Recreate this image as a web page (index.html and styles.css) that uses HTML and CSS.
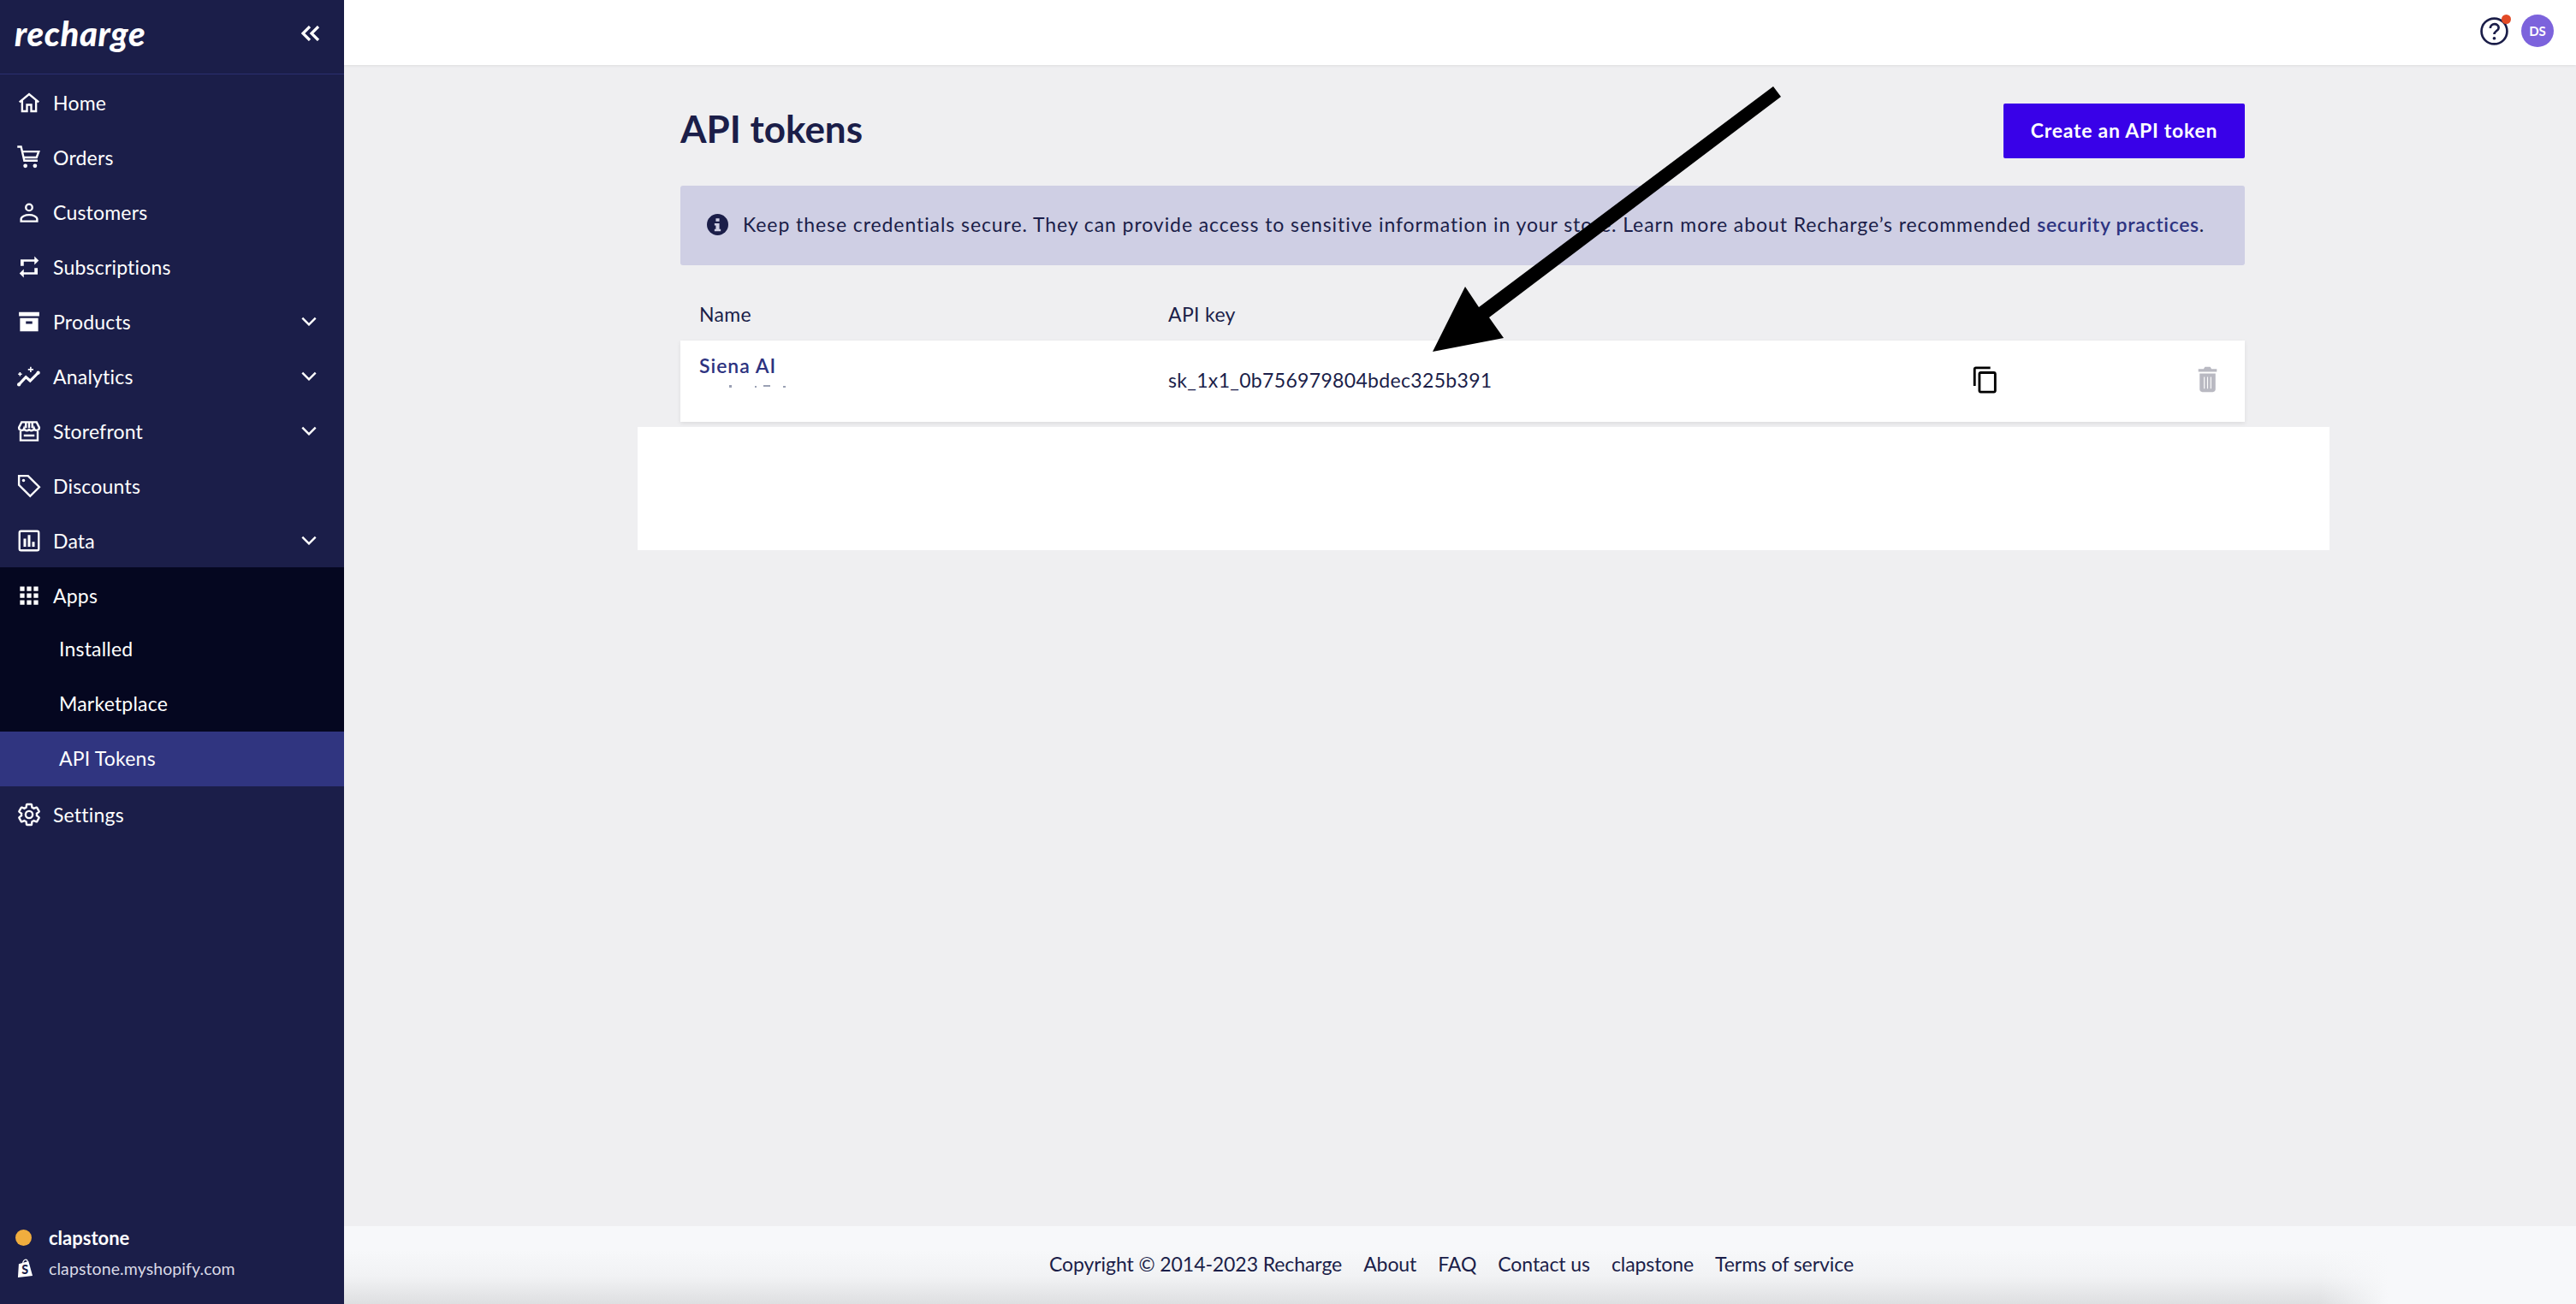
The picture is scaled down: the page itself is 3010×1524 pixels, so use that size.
FILE: index.html
```html
<!doctype html>
<html>
<head>
<meta charset="utf-8">
<title>API tokens</title>
<link rel="stylesheet" href="styles.css">
</head>
<body>
<div class="app">
	<aside class="side">
		<div class="brand">
			<span class="logo">recharge</span>
			<svg class="collapse" viewBox="0 0 22 18"><path d="M10 1 2 9l8 8M20 1l-8 8 8 8"/></svg>
		</div>
		<nav class="nav">
			<a class="item"><svg class="ico" viewBox="0 0 24 24"><path d="M3 11.500 12 4l9 7.500M5.500 10v10H10v-6h4v6h4.500V10"/></svg>Home</a>
			<a class="item"><svg class="ico" viewBox="0 0 24 24"><path d="M1 2h3.500l3 13h12.500M5.500 6.500h15.500l-2 5.500H7"/><circle class="dot" cx="8.500" cy="19.800" r="1.900"/><circle class="dot" cx="17.500" cy="19.800" r="1.900"/></svg>Orders</a>
			<a class="item"><svg class="ico" viewBox="0 0 24 24"><circle cx="12" cy="7.500" r="3"/><path d="M4.500 20.500v-2c0-2.500 4-4 7.500-4s7.500 1.500 7.500 4v2z"/></svg>Customers</a>
			<a class="item"><svg class="ico" viewBox="0 0 24 24"><path class="solid" d="M7 7h10v3l4-4-4-4v3H4v6h3V7zm10 10H7v-3l-4 4 4 4v-3h13v-6h-3v4z"/></svg>Subscriptions</a>
			<a class="item"><svg class="ico" viewBox="0 0 24 24"><path class="solid" fill-rule="evenodd" d="M2.500 3h19v3.800h-19zM3.500 8.500h17V21h-17zM9 11.500V14h6v-2.500z"/></svg>Products<svg class="chev" viewBox="0 0 16 10"><path d="M1 1.500 8 8.500l7-7"/></svg></a>
			<a class="item"><svg class="ico" viewBox="0 0 24 24"><path class="thick" d="M2.500 19.500l6.500-7 4 3.500 7.500-7.500"/><path class="thin" d="M3.500 8v3.500M1.800 9.800h3.500M13.500 3v5M11 5.500h5"/><circle class="dot" cx="2.500" cy="19.500" r="1.700"/><circle class="dot" cx="20.500" cy="8.500" r="1.700"/></svg>Analytics<svg class="chev" viewBox="0 0 16 10"><path d="M1 1.500 8 8.500l7-7"/></svg></a>
			<a class="item"><svg class="ico" viewBox="0 0 24 24"><path d="M5 3.500h14l2.500 5c0 3-4 3.500-4.800 1-.8 2.500-4.700 2.500-4.700 0 0 2.500-3.900 2.500-4.700 0C6.500 12 2.500 11.500 2.500 8.500zM4 12v8.500h16V12M9 4v5M12 4v5M15 4v5M7 16h10"/></svg>Storefront<svg class="chev" viewBox="0 0 16 10"><path d="M1 1.500 8 8.500l7-7"/></svg></a>
			<a class="item"><svg class="ico" viewBox="0 0 24 24"><path d="M2.500 2.500h8.500l10.500 10.500-8.500 8.500L2.500 11z"/><circle class="dot" cx="6.800" cy="6.800" r="1.400"/></svg>Discounts</a>
			<a class="item"><svg class="ico" viewBox="0 0 24 24"><rect x="3" y="3" width="18" height="18" rx="1.500"/><path class="solid" d="M6.800 10h2.400v7.500H6.800zM10.800 6.500h2.400v11h-2.400zM14.800 13h2.400v4.500h-2.400z"/></svg>Data<svg class="chev" viewBox="0 0 16 10"><path d="M1 1.500 8 8.500l7-7"/></svg></a>
			<div class="group">
				<a class="item"><svg class="ico" viewBox="0 0 24 24"><path class="solid" d="M3.500 3.500h4.200v4.200H3.500zM9.900 3.500h4.200v4.200H9.900zM16.300 3.500h4.200v4.200h-4.200zM3.500 9.900h4.200v4.200H3.500zM9.900 9.900h4.200v4.200H9.900zM16.300 9.900h4.200v4.200h-4.200zM3.500 16.300h4.200v4.200H3.500zM9.900 16.300h4.200v4.200H9.900zM16.300 16.300h4.200v4.200h-4.200z"/></svg>Apps</a>
				<a class="item sub">Installed</a>
				<a class="item sub">Marketplace</a>
			</div>
			<a class="item sub active">API Tokens</a>
			<a class="item"><svg class="ico" viewBox="0 0 24 24"><path d="M19.140 12.940c.04-.3.06-.61.06-.94 0-.32-.02-.64-.07-.94l2.030-1.580c.18-.14.23-.41.12-.61l-1.920-3.320c-.12-.22-.37-.29-.59-.22l-2.390.96c-.5-.38-1.030-.7-1.620-.94l-.36-2.540c-.04-.24-.24-.41-.48-.41h-3.840c-.24 0-.43.17-.47.41l-.36 2.540c-.59.24-1.130.57-1.620.94l-2.390-.96c-.22-.08-.47 0-.59.22L2.740 8.870c-.12.21-.08.47.12.61l2.030 1.580c-.05.3-.09.63-.09.94s.02.64.07.94l-2.030 1.580c-.18.14-.23.41-.12.61l1.920 3.320c.12.22.37.29.59.22l2.390-.96c.5.38 1.030.7 1.620.94l.36 2.540c.05.24.24.41.48.41h3.840c.24 0 .44-.17.47-.41l.36-2.540c.59-.24 1.130-.56 1.620-.94l2.390.96c.22.08.47 0 .59-.22l1.920-3.320c.12-.22.07-.47-.12-.61z"/><circle cx="12" cy="12" r="3.300"/></svg>Settings</a>
		</nav>
		<div class="store">
			<div class="store-line"><span class="status"></span><b class="store-name">clapstone</b></div>
			<div class="store-line"><svg class="bag" viewBox="0 0 20 24"><path class="bag-fill" d="M2 6.500 14 3l5 18-18 2z"/><path class="bag-top" d="M7 6c0-3 2-5 3.500-5S13 3 13 5"/><text class="bag-s" x="5.500" y="19">S</text></svg><span class="store-url">clapstone.myshopify.com</span></div>
		</div>
	</aside>
	<div class="main">
		<header class="top">
			<div class="help">
				<svg class="help-ico" viewBox="0 0 32 32"><circle cx="16" cy="16" r="14.500"/><path d="M11.500 12.500c0-6 9.500-6 9.500-.5 0 3.500-5 3.500-5 7.500"/><circle class="q-dot" cx="16" cy="24" r="1.800"/></svg>
				<span class="badge"></span>
			</div>
			<span class="avatar">DS</span>
		</header>
		<div class="content">
			<div class="title-row">
				<h1>API tokens</h1>
				<a class="btn">Create an API token</a>
			</div>
			<div class="alert">
				<svg class="info" viewBox="0 0 24 24"><circle cx="12" cy="12" r="12"/><path class="info-i" d="M10 5h4v3.500h-4zM8.500 10.500H14V17h1.500v2.500h-7V17H10v-4H8.500z"/></svg>
				<p>Keep these credentials secure. They can provide access to sensitive information in your store. Learn more about Recharge’s recommended <a class="link">security practices</a>.</p>
			</div>
			<div class="cols">
				<span>Name</span>
				<span>API key</span>
			</div>
			<div class="cols row">
				<div class="name-cell">
					<a class="token-name">Siena AI</a>
					<svg class="token-sub" viewBox="0 0 110 3"><path d="M35 0h3v3h-3zM65 1h2v2h-2zM75 0h8v2h-8zM98 1h3v2h-3z"/></svg>
				</div>
				<span>sk_1x1_0b756979804bdec325b391</span>
				<svg class="copy" viewBox="0 0 24 24"><path d="M16 1H4c-1.100 0-2 .9-2 2v14h2V3h12V1zm3 4H8c-1.100 0-2 .9-2 2v14c0 1.100.9 2 2 2h11c1.100 0 2-.9 2-2V7c0-1.100-.9-2-2-2zm0 16H8V7h11v14z"/></svg>
				<svg class="trash" viewBox="0 0 24 24"><path d="M5 4h4l1-1.500h4L15 4h4v2.200H5zM6 7.500h12V19.500c0 1.100-.9 2-2 2H8c-1.100 0-2-.9-2-2z"/><path class="trash-line" d="M9.500 10v9M12 10v9M14.500 10v9"/></svg>
			</div>
		</div>
		<footer class="foot">
			<span>Copyright © 2014-2023 Recharge</span>
			<a>About</a>
			<a>FAQ</a>
			<a>Contact us</a>
			<a>clapstone</a>
			<a>Terms of service</a>
		</footer>
	</div>
</div>
<div class="blank"></div>
<svg class="arrow" viewBox="0 0 3010 1524"><polygon points="2072,101 2081,113 1740,371 1757,395 1674,411 1712,335 1728,359"/></svg>
</body>
</html>
```

FILE: styles.css
```css
*{
	margin:0;
	padding:0;
	box-sizing:border-box;
}
html,body{
	height:100%;
	overflow:hidden;
}
body{
	position:relative;
	font-family:"Lato","Noto Sans",sans-serif;
	font-size:23px;
	color:#1b1e49;
	background:#efeff1;
}
.app{
	display:flex;
	height:1524px;
}

/* sidebar */
.side{
	width:402px;
	flex:none;
	display:flex;
	flex-direction:column;
	background:#1b1e49;
	color:#fff;
}
.brand{
	height:87px;
	flex:none;
	display:flex;
	align-items:center;
	justify-content:space-between;
	padding:0 28px 8px 17px;
	border-bottom:1px solid #2b2f70;
}
.logo{
	font-size:40px;
	font-weight:900;
	font-style:italic;
	letter-spacing:.6px;
}
.collapse{
	width:22px;
	height:18px;
	fill:none;
	stroke:#fff;
	stroke-width:3.2;
}
.item{
	height:64px;
	display:flex;
	align-items:center;
	gap:13px;
	padding:1px 32px 0 19px;
	font-size:23px;
	letter-spacing:.2px;
}
.group{
	background:#050720;
}
.sub{
	padding:0 32px 3px 69px;
}
.active{
	background:#303580;
}
.ico{
	width:30px;
	height:30px;
	flex:none;
	fill:none;
	stroke:#fff;
	stroke-width:1.9;
}
.ico .dot,
.ico .solid{
	fill:#fff;
	stroke:none;
}
.ico .thin{
	stroke-width:1.300;
}
.ico .thick{
	stroke-width:2.500;
}
.chev{
	width:18px;
	height:11px;
	margin-left:auto;
	fill:none;
	stroke:#fff;
	stroke-width:2.2;
}
.store{
	margin-top:auto;
	padding:0 0 24px 18px;
}
.store-line{
	display:flex;
	align-items:center;
	gap:20px;
	height:36px;
}
.status{
	width:19px;
	height:19px;
	border-radius:50%;
	background:#f0ad3e;
}
.store-name{
	font-size:22px;
}
.bag{
	width:19px;
	height:23px;
	margin-left:2px;
	margin-right:-2px;
}
.bag-fill{
	fill:#fff;
}
.bag-top{
	fill:none;
	stroke:#fff;
	stroke-width:1.3;
}
.bag-s{
	font-size:15px;
	font-weight:900;
	fill:#1b1e49;
}
.store-url{
	font-size:19.500px;
	color:#d9dae6;
	letter-spacing:.1px;
}

/* main */
.main{
	flex:1;
	display:flex;
	flex-direction:column;
}
.top{
	height:76px;
	flex:none;
	display:flex;
	align-items:center;
	justify-content:flex-end;
	gap:15px;
	padding-right:26px;
	background:#fff;
	box-shadow:0 1px 3px rgba(0,0,0,.08);
}
.help{
	position:relative;
	width:33px;
	height:33px;
	margin-top:-4px;
}
.help-ico{
	width:33px;
	height:33px;
	display:block;
	fill:none;
	stroke:#1b1e49;
	stroke-width:2.6;
}
.help-ico .q-dot{
	fill:#1b1e49;
	stroke:none;
}
.badge{
	position:absolute;
	top:-3px;
	right:-3px;
	width:11px;
	height:11px;
	border-radius:50%;
	background:#e24a26;
}
.avatar{
	width:38px;
	height:38px;
	margin-top:-4px;
	display:flex;
	align-items:center;
	justify-content:center;
	border-radius:50%;
	background:#7c63dc;
	color:#fff;
	font-size:15px;
	font-weight:700;
}
.content{
	width:1828px;
	margin-left:393px;
}
.title-row{
	display:flex;
	align-items:center;
	justify-content:space-between;
	margin-top:45px;
}
h1{
	font-size:44px;
	font-weight:700;
	padding-bottom:6px;
}
.btn{
	width:282px;
	height:64px;
	display:flex;
	align-items:center;
	justify-content:center;
	padding-bottom:3px;
	border-radius:2px;
	background:#3901e8;
	color:#fff;
	font-weight:700;
	letter-spacing:.75px;
}
.alert{
	height:93px;
	margin-top:32px;
	display:flex;
	align-items:center;
	gap:17px;
	padding:0 0 3px 31px;
	border-radius:3px;
	background:#cfcfe4;
	letter-spacing:.92px;
}
.info{
	width:25px;
	height:25px;
	flex:none;
	fill:#1b1e49;
}
.info .info-i{
	fill:#cfcfe4;
}
.link{
	color:#2d3380;
	font-weight:600;
	letter-spacing:.7px;
}
.cols{
	display:grid;
	grid-template-columns:548px 938px 1fr 37px;
	align-items:center;
	height:58px;
	margin-top:30px;
	padding:0 25px 4px 22px;
	letter-spacing:.33px;
}
.row{
	height:95px;
	margin-top:0;
	background:#fff;
	box-shadow:0 2px 5px rgba(0,0,0,.08);
}
.name-cell{
	align-self:start;
	padding-top:15px;
}
.token-name{
	display:block;
	line-height:28px;
	color:#2d3380;
	font-weight:600;
	letter-spacing:1px;
}
.token-sub{
	display:block;
	width:110px;
	height:3px;
	margin-top:9px;
	fill:#9aa0b4;
}
.copy{
	width:34px;
	height:34px;
	fill:#000;
}
.trash{
	width:37px;
	height:37px;
	fill:#b9b9c2;
}
.trash-line{
	fill:none;
	stroke:#fff;
	stroke-width:.7;
}
.foot{
	height:91px;
	margin-top:auto;
	display:flex;
	align-items:center;
	justify-content:center;
	gap:25px;
	padding:0 20px 4px 0;
	letter-spacing:-.08px;
	background:
		linear-gradient(to right,rgba(247,248,250,0) 88.500%,#f7f8fa 91.600%),
		linear-gradient(#f7f8fa 30%,#f1f2f4 65%,#dedfe1);
}

/* things lying over the page */
.blank{
	position:absolute;
	left:745px;
	top:499px;
	width:1977px;
	height:144px;
	background:#fff;
}
.arrow{
	position:absolute;
	left:0;
	top:0;
	width:3010px;
	height:1524px;
	pointer-events:none;
}
```
